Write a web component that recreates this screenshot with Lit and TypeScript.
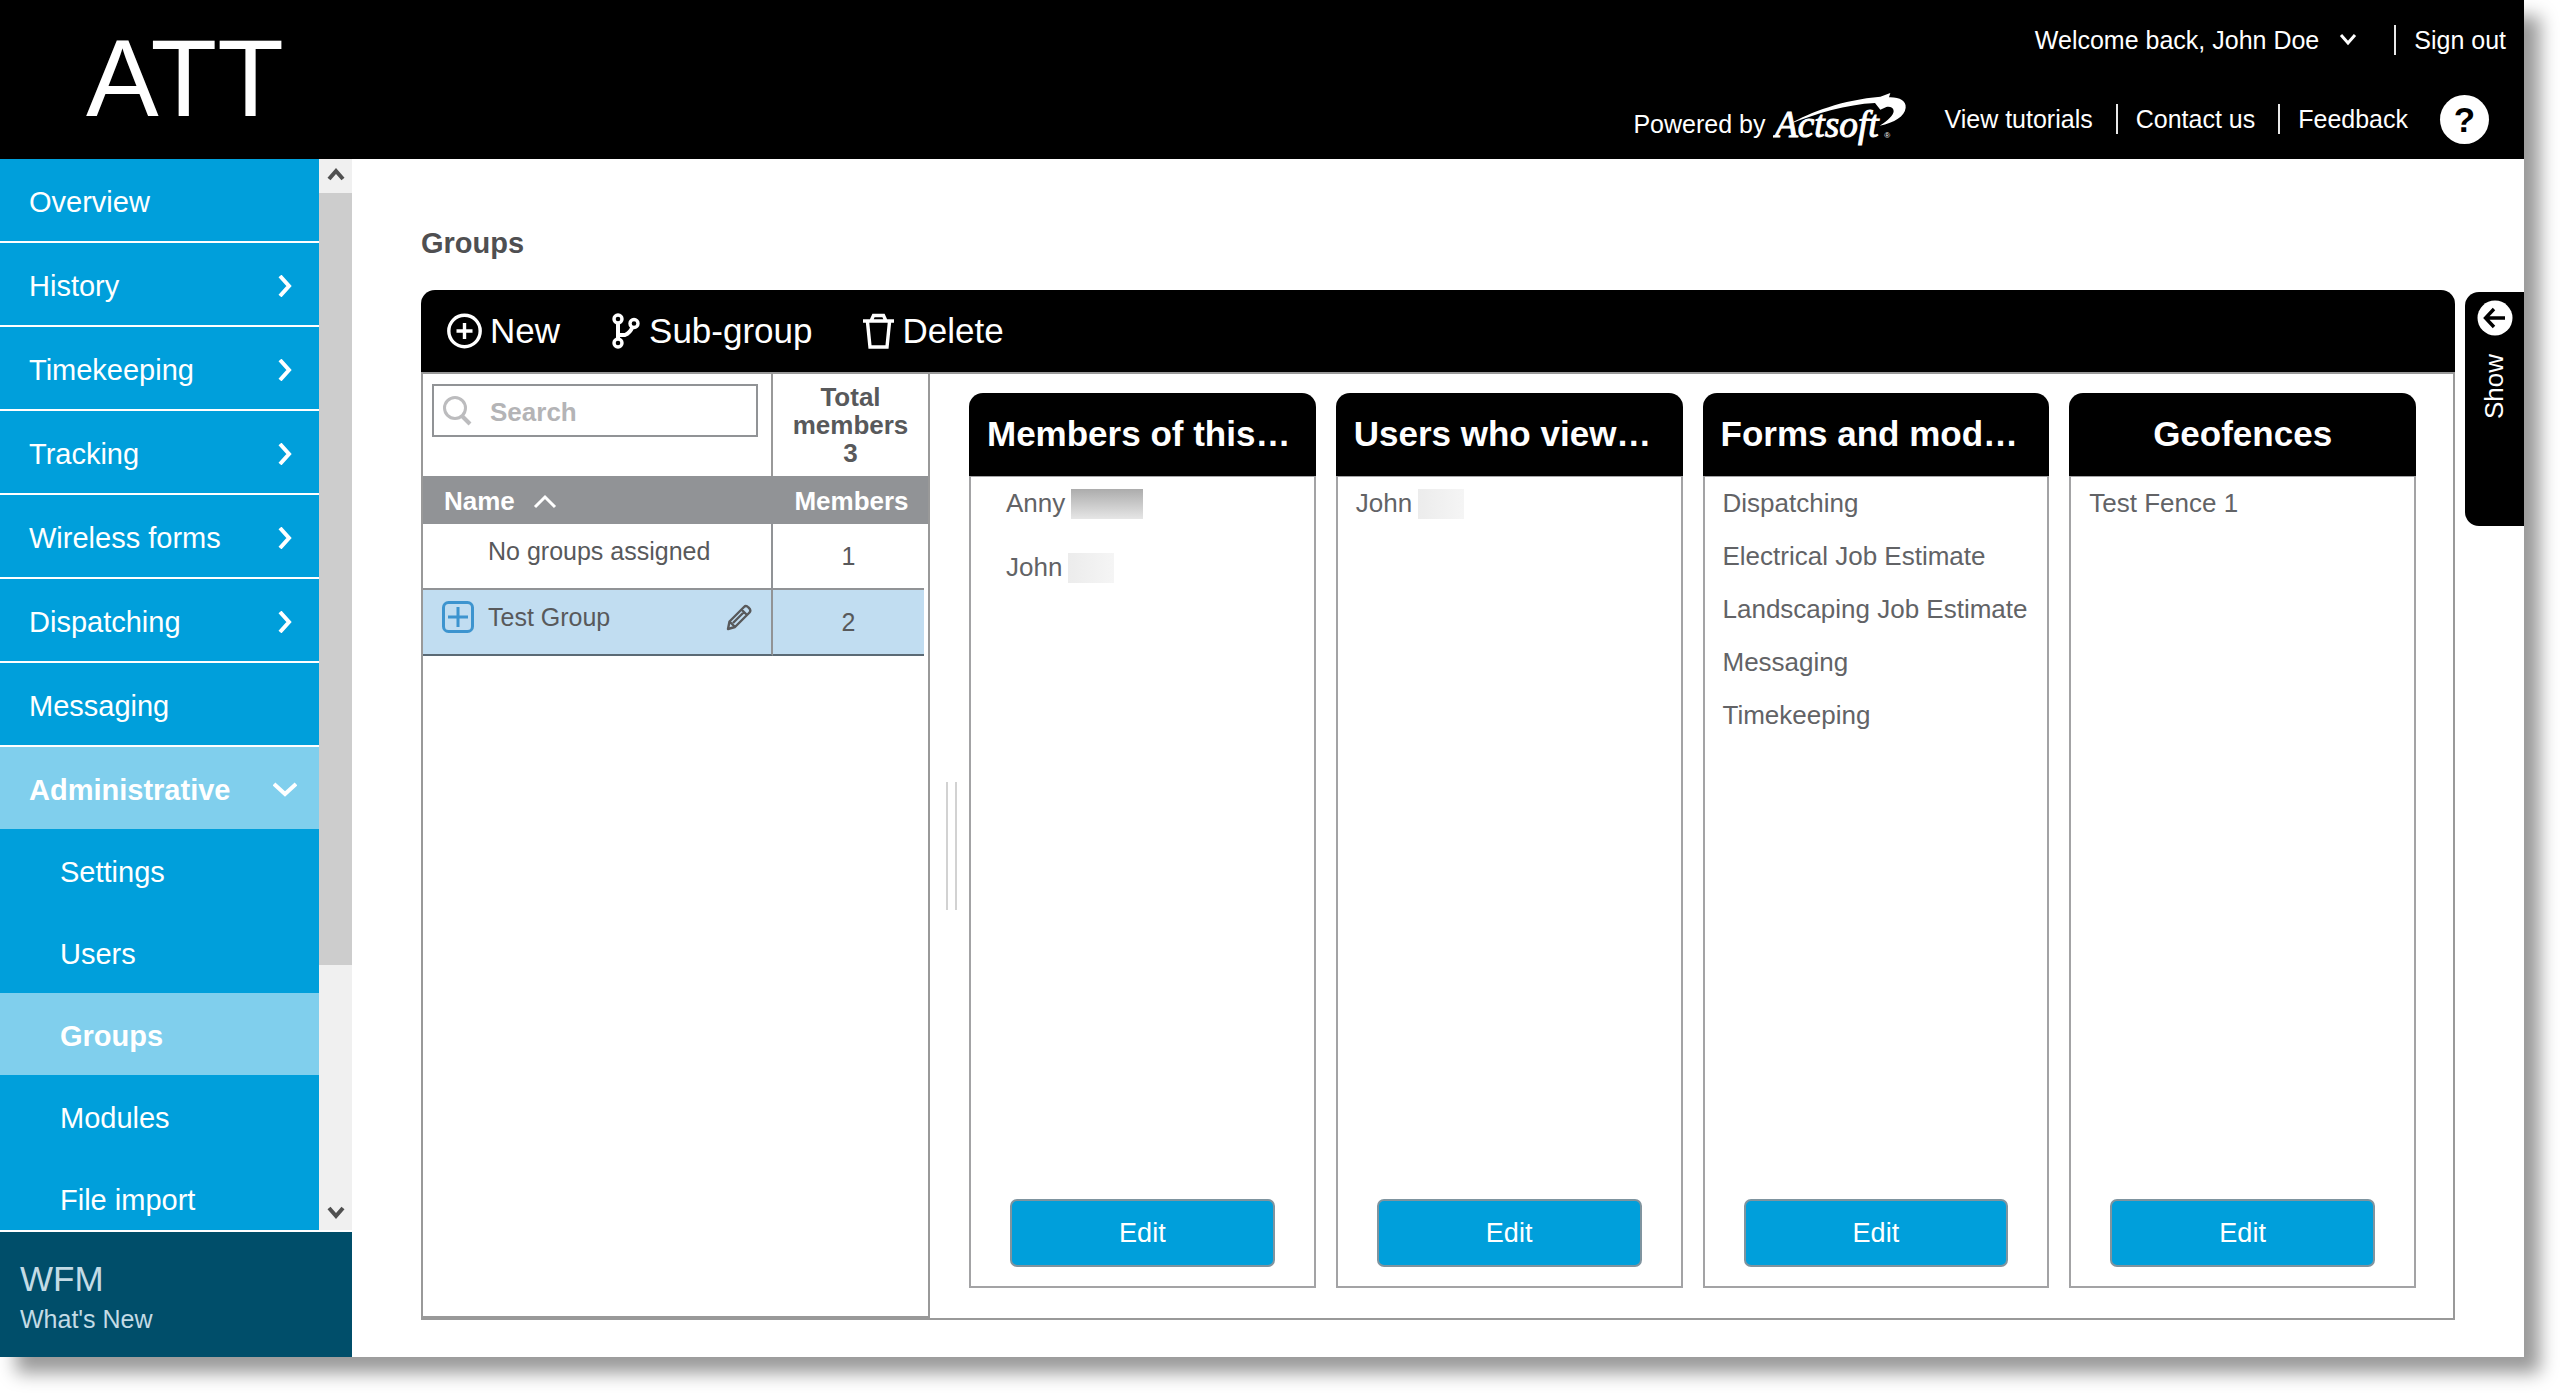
import { LitElement, html, css, svg, nothing } from "lit";
import { customElement, property, state } from "lit/decorators.js";
import { classMap } from "lit/directives/class-map.js";

const base = css`
  * {
    box-sizing: border-box;
  }
  button,
  input {
    font: inherit;
    color: inherit;
    margin: 0;
    padding: 0;
    border: 0;
    background: none;
  }
  a {
    color: inherit;
    text-decoration: none;
  }
  ul {
    list-style: none;
    margin: 0;
    padding: 0;
  }
  svg {
    display: block;
    flex: none;
  }
  h1,
  h2 {
    margin: 0;
  }
`;

const chevron = (d: string, w: number, h: number, stroke = 3) => html`
  <svg width=${w} height=${h} viewBox="0 0 ${w} ${h}" fill="none" stroke="currentColor" stroke-width=${stroke} aria-hidden="true">
    <path d=${d} />
  </svg>
`;

@customElement("top-header")
class TopHeader extends LitElement {
  static styles = [
    base,
    css`
      :host {
        display: flex;
        justify-content: space-between;
        height: 159px;
        background: #000;
        color: #fff;
        font-size: 25px;
        line-height: 30px;
      }
      .brand {
        padding-left: 86px;
        font-size: 109px;
        line-height: 156px;
      }
      .side {
        display: flex;
        flex-direction: column;
        align-items: flex-end;
      }
      .row {
        display: flex;
        align-items: center;
        flex: 1;
        white-space: nowrap;
      }
      .account {
        padding-right: 18px;
      }
      .tools {
        padding-right: 35px;
      }
      .user {
        display: flex;
        align-items: center;
        gap: 20px;
        padding-right: 37px;
      }
      .powered {
        display: flex;
        align-items: center;
        gap: 8px;
        padding: 10px 36px 0 0;
      }
      .powered svg {
        margin-top: -10px;
      }
      .divided {
        margin-left: 23px;
        padding-left: 18px;
        border-left: 2px solid #e8e8e8;
      }
      .account .divided {
        margin-left: 0;
      }
      .help {
        margin-left: 32px;
        width: 49px;
        height: 49px;
        border-radius: 50%;
        background: #fff;
        color: #000;
        font-size: 35px;
        line-height: 49px;
        font-weight: 700;
        text-align: center;
      }
    `,
  ];

  render() {
    return html`
      <div class="brand">ATT</div>
      <div class="side">
        <div class="row account">
          <button class="user">Welcome back, John Doe ${chevron("M2 2 L9 10 L16 2", 18, 14)}</button>
          <a class="divided" href="#sign-out">Sign out</a>
        </div>
        <nav class="row tools">
          <span class="powered">
            Powered by
            <svg width="135" height="56" viewBox="40 36 405 168" role="img" aria-label="Actsoft">
              <text x="46" y="174" font-family="Liberation Serif, serif" font-style="italic" font-size="112" fill="#fff" stroke="#fff" stroke-width="3">Actsoft</text>
              <text x="374" y="176" font-family="Liberation Sans, sans-serif" font-size="24" fill="#fff">®</text>
              <path
                fill="#fff"
                d="M92 134 C150 100 250 62 362 53 L392 42 L388 55 C420 54 440 66 438 86 C435 112 405 130 360 140 C386 124 402 108 402 96 C401 86 392 82 380 84 L362 92 L346 72 C260 76 170 104 92 134 Z"
              />
            </svg>
          </span>
          <a href="#tutorials">View tutorials</a>
          <a class="divided" href="#contact">Contact us</a>
          <a class="divided" href="#feedback">Feedback</a>
          <button class="help" aria-label="Help">?</button>
        </nav>
      </div>
    `;
  }
}

interface NavItem {
  label: string;
  expandable?: boolean;
}

@customElement("side-nav")
class SideNav extends LitElement {
  static styles = [
    base,
    css`
      :host {
        display: flex;
        flex-direction: column;
        width: 352px;
        flex: none;
        min-height: 0;
        color: #fff;
        font-size: 29px;
        line-height: 34px;
      }
      .scroller {
        display: flex;
        flex: 1 1 0;
        min-height: 0;
        border-bottom: 2px solid #fff;
      }
      .menu {
        flex: 1;
        overflow: hidden;
        background: #009fdb;
      }
      .entry {
        display: flex;
        align-items: center;
        justify-content: space-between;
        width: 100%;
        height: 82px;
        padding: 3px 26px 0 29px;
        text-align: left;
      }
      .top {
        border-bottom: 2px solid #fff;
      }
      .child {
        padding-left: 60px;
      }
      .active {
        background: #80cfed;
        font-weight: 700;
      }
      .open {
        padding-right: 22px;
      }
      .bar {
        display: flex;
        flex-direction: column;
        width: 33px;
        background: #f0f0f0;
        color: #505050;
      }
      .step {
        display: grid;
        place-items: center;
        height: 34px;
      }
      .track {
        flex: 1;
      }
      .thumb {
        height: 77%;
        background: #cdcdcd;
      }
      .news {
        display: block;
        height: 125px;
        padding: 25px 20px;
        background: #004e6a;
        color: #c3dbe5;
        font-size: 25px;
        line-height: 36px;
      }
      .product {
        display: block;
        font-size: 35px;
        line-height: 44px;
      }
    `,
  ];

  private items: NavItem[] = [
    { label: "Overview" },
    { label: "History", expandable: true },
    { label: "Timekeeping", expandable: true },
    { label: "Tracking", expandable: true },
    { label: "Wireless forms", expandable: true },
    { label: "Dispatching", expandable: true },
    { label: "Messaging" },
  ];

  private adminPages = ["Settings", "Users", "Groups", "Modules", "File import"];

  @state() private current = "Groups";

  render() {
    return html`
      <div class="scroller">
        <nav class="menu">
          <ul>
            ${this.items.map(
              (i) => html`<li class="top">
                ${i.expandable
                  ? html`<button class="entry" aria-expanded="false">${i.label}${chevron("M2 1 L11 11 L2 21", 15, 22, 4)}</button>`
                  : html`<a class="entry" href="#${i.label}">${i.label}</a>`}
              </li>`,
            )}
            <li>
              <button class="entry active open" aria-expanded="true">Administrative${chevron("M1 2 L12 12 L23 2", 24, 15, 4)}</button>
              <ul>
                ${this.adminPages.map(
                  (c) => html`<li>
                    <a class=${classMap({ entry: true, child: true, active: c === this.current })} href="#${c}" @click=${() => (this.current = c)}>${c}</a>
                  </li>`,
                )}
              </ul>
            </li>
          </ul>
        </nav>
        <div class="bar">
          <div class="step">${chevron("M2 12 L9 4 L16 12", 18, 18, 4)}</div>
          <div class="track"><div class="thumb"></div></div>
          <div class="step">${chevron("M2 2 L9 10 L16 2", 18, 14, 4)}</div>
        </div>
      </div>
      <a class="news" href="#whats-new"><span class="product">WFM</span>What's New</a>
    `;
  }
}

@customElement("group-table")
class GroupTable extends LitElement {
  static styles = [
    base,
    css`
      :host {
        display: block;
        width: 507px;
        flex: none;
        border-right: 2px solid #999;
        border-bottom: 2px solid #999;
        color: #58595b;
        font-size: 26px;
        line-height: 28px;
      }
      table {
        width: 100%;
        border-collapse: separate;
        border-spacing: 0;
        table-layout: fixed;
      }
      .name-col {
        width: 350px;
      }
      .edge-col {
        width: 4px;
      }
      th,
      td {
        padding: 0;
      }
      td {
        font-size: 25px;
      }
      .filter th {
        height: 102px;
      }
      .filter .find {
        vertical-align: top;
        padding: 10px 13px 0 9px;
        border-right: 2px solid #999;
      }
      .search {
        display: flex;
        align-items: center;
        gap: 18px;
        height: 53px;
        padding-left: 8px;
        border: 2px solid #919396;
      }
      .search input {
        width: 100%;
        min-width: 0;
        padding-top: 2px;
        font-weight: 700;
        outline: 0;
      }
      .search input::placeholder {
        color: #b4b4b6;
        opacity: 1;
      }
      .head th {
        height: 48px;
        padding: 2px 0 0 2px;
        background: #919396;
        color: #fff;
      }
      .sort {
        display: flex;
        align-items: center;
        gap: 18px;
        padding-left: 19px;
        font-weight: 700;
      }
      .name,
      .count {
        height: 66px;
        border-bottom: 2px solid #919396;
      }
      .name {
        border-right: 2px solid #919396;
      }
      .count {
        text-align: center;
      }
      .cell {
        display: flex;
        align-items: center;
        gap: 14px;
        padding: 0 19px 10px 19px;
      }
      .label {
        flex: 1;
      }
      .indent {
        width: 32px;
      }
      .picked .name,
      .picked .count {
        background: #c1ddf1;
        border-bottom-color: #5b6a75;
      }
    `,
  ];

  render() {
    return html`
      <table>
        <colgroup>
          <col class="name-col" />
          <col />
          <col class="edge-col" />
        </colgroup>
        <thead>
          <tr class="filter">
            <th class="find">
              <label class="search">
                <svg width="30" height="30" viewBox="0 0 30 30" fill="none" stroke="#bcbcbe" stroke-width="3" aria-hidden="true">
                  <circle cx="13" cy="12" r="10.5" />
                  <path d="M20 20 L28 28" stroke-width="4" />
                </svg>
                <input type="text" placeholder="Search" aria-label="Search" />
              </label>
            </th>
            <th colspan="2">Total<br />members<br />3</th>
          </tr>
          <tr class="head">
            <th><button class="sort">Name ${chevron("M2 13 L12 3 L22 13", 24, 15)}</button></th>
            <th colspan="2">Members</th>
          </tr>
        </thead>
        <tbody>
          <tr>
            <td class="name"><div class="cell"><span class="indent"></span><span class="label">No groups assigned</span></div></td>
            <td class="count">1</td>
            <td></td>
          </tr>
          <tr class="picked">
            <td class="name">
              <div class="cell">
                <button aria-label="Expand">
                  <svg width="32" height="32" viewBox="0 0 32 32" fill="none" stroke="#3d94cf" stroke-width="3">
                    <rect x="1.5" y="1.5" width="29" height="29" rx="5" />
                    <path d="M16 6 V26 M6 16 H26" />
                  </svg>
                </button>
                <span class="label">Test Group</span>
                <button aria-label="Edit group">
                  <svg width="26" height="27" viewBox="0 0 26 27" fill="none" stroke="#58595b" stroke-width="2.4" stroke-linejoin="round">
                    <path d="M2 25 L3.500 17.500 L18 3 Q20 1 22.500 3.500 Q25.500 6 23.500 8.500 L9 23 Z M3.500 17.500 L9 23 M15.500 5.500 L21 11 M7 19 L18 8" />
                  </svg>
                </button>
              </div>
            </td>
            <td class="count">2</td>
            <td></td>
          </tr>
        </tbody>
      </table>
    `;
  }
}

interface Entry {
  text: string;
  mask?: "dark" | "light";
}

@customElement("detail-card")
class DetailCard extends LitElement {
  static styles = [
    base,
    css`
      :host {
        display: flex;
        flex-direction: column;
        min-width: 0;
        color: #626366;
        font-size: 26px;
      }
      h2 {
        height: 83px;
        padding: 0 18px;
        border-radius: 14px 14px 0 0;
        background: #000;
        color: #fff;
        font-size: 35px;
        line-height: 82px;
        text-align: center;
        white-space: nowrap;
      }
      .clipped {
        text-align: left;
      }
      .body {
        display: flex;
        flex-direction: column;
        justify-content: space-between;
        flex: 1;
        padding: 0 0 19px;
        border: 2px solid #a3a3a5;
        border-top-width: 1px;
      }
      .list {
        display: flex;
        flex-direction: column;
        padding-left: 18px;
      }
      .people {
        gap: 11px;
        padding-left: 35px;
      }
      li {
        display: flex;
        align-items: center;
        gap: 6px;
        height: 53px;
        white-space: nowrap;
      }
      .mask {
        width: 46px;
        height: 30px;
        background: linear-gradient(90deg, #ececec, #f5f5f5);
      }
      .dark {
        width: 72px;
        background: linear-gradient(#acacac, #e6e6e6);
      }
      .edit {
        align-self: stretch;
        height: 68px;
        margin: 0 39px;
        border: 2px solid #7f949f;
        border-radius: 7px;
        background: #009fdb;
        color: #fff;
        font-size: 27px;
      }
    `,
  ];

  @property() heading = "";
  @property({ attribute: false }) entries: Entry[] = [];
  @property({ type: Boolean }) people = false;

  render() {
    return html`
      <h2 class=${classMap({ clipped: this.heading.endsWith("…") })}>${this.heading}</h2>
      <div class="body">
        <ul class=${classMap({ list: true, people: this.people })}>
          ${this.entries.map(
            (e) => html`<li>${e.text}${e.mask ? html`<span class=${classMap({ mask: true, dark: e.mask === "dark" })}></span>` : nothing}</li>`,
          )}
        </ul>
        <button class="edit">Edit</button>
      </div>
    `;
  }
}

@customElement("app-root")
class AppRoot extends LitElement {
  static styles = [
    base,
    css`
      :host {
        display: block;
        height: 100vh;
        overflow: hidden;
        padding: 0 36px 36px 0;
        box-sizing: border-box;
        background: #fff;
        font-family: "Liberation Sans", Arial, sans-serif;
      }
      .frame {
        display: flex;
        flex-direction: column;
        height: 100%;
        background: #fff;
        box-shadow: 16px 16px 17px rgba(0, 0, 0, 0.4);
      }
      .content {
        display: flex;
        flex: 1;
        min-height: 0;
      }
      main {
        display: flex;
        flex-direction: column;
        flex: 1;
        min-width: 0;
        padding: 66px 0 37px 69px;
      }
      h1 {
        margin-bottom: 29px;
        color: #4f4f51;
        font-size: 29px;
        line-height: 36px;
      }
      .work {
        display: flex;
        flex: 1;
        gap: 10px;
      }
      .panel {
        display: flex;
        flex-direction: column;
        flex: 1;
        min-width: 0;
      }
      .toolbar {
        display: flex;
        gap: 51px;
        height: 82px;
        padding-left: 26px;
        border-radius: 14px 14px 0 0;
        background: #000;
        color: #fff;
        font-size: 35px;
      }
      .action {
        display: flex;
        align-items: center;
        gap: 8px;
      }
      .split {
        display: flex;
        flex: 1;
        border: 2px solid #999;
      }
      .grip {
        align-self: center;
        width: 11px;
        height: 128px;
        margin: 0 12px 0 16px;
        border: solid #d2d2d2;
        border-width: 0 2px;
      }
      .cards {
        display: grid;
        grid-template-columns: repeat(4, minmax(0, 1fr));
        gap: 20px;
        flex: 1;
        padding: 19px 37px 30px 0;
      }
      .show {
        display: flex;
        flex-direction: column;
        align-items: center;
        gap: 18px;
        width: 59px;
        height: 234px;
        margin-top: 2px;
        padding-top: 8px;
        border-radius: 14px 0 0 14px;
        background: #000;
        color: #fff;
        font-size: 26px;
      }
      .vertical {
        writing-mode: vertical-rl;
        transform: rotate(180deg);
      }
    `,
  ];

  private members: Entry[] = [
    { text: "Anny", mask: "dark" },
    { text: "John", mask: "light" },
  ];
  private viewers: Entry[] = [{ text: "John", mask: "light" }];
  private forms: Entry[] = ["Dispatching", "Electrical Job Estimate", "Landscaping Job Estimate", "Messaging", "Timekeeping"].map((text) => ({ text }));
  private fences: Entry[] = [{ text: "Test Fence 1" }];

  private icon(width: number, shapes: unknown) {
    return html`<svg width=${width} height="36" viewBox="0 0 ${width} 36" fill="none" stroke="currentColor" stroke-width="3.4" aria-hidden="true">${shapes}</svg>`;
  }

  render() {
    return html`
      <div class="frame">
        <top-header></top-header>
        <div class="content">
          <side-nav></side-nav>
          <main>
            <h1>Groups</h1>
            <div class="work">
              <section class="panel">
                <div class="toolbar">
                  <button class="action">
                    ${this.icon(35, svg`<circle cx="17.500" cy="18" r="15.700" /><path d="M17.500 10 V26 M9.500 18 H25.500" />`)}New
                  </button>
                  <button class="action">
                    ${this.icon(
                      30,
                      svg`<circle cx="7" cy="6" r="4" /><circle cx="7" cy="30" r="4" /><circle cx="23" cy="10.500" r="4" /><path d="M7 10 V26 M7 22 H14 Q19 20 21.500 14" stroke-width="4" />`,
                    )}Sub-group
                  </button>
                  <button class="action">
                    ${this.icon(31, svg`<path d="M0 8 H31 M8 8 L10.500 2.500 H20.500 L23 8 M4.500 9 L7 34 H24 L26.500 9" />`)}Delete
                  </button>
                </div>
                <div class="split">
                  <group-table></group-table>
                  <div class="grip"></div>
                  <div class="cards">
                    <detail-card heading="Members of this…" .entries=${this.members} people></detail-card>
                    <detail-card heading="Users who view…" .entries=${this.viewers}></detail-card>
                    <detail-card heading="Forms and mod…" .entries=${this.forms}></detail-card>
                    <detail-card heading="Geofences" .entries=${this.fences}></detail-card>
                  </div>
                </div>
              </section>
              <button class="show">
                <svg width="36" height="36" viewBox="0 0 36 36" fill="none" stroke="#000" stroke-width="3.4" aria-hidden="true">
                  <circle cx="18" cy="18" r="17.500" fill="#fff" stroke="none" />
                  <path d="M9 18 H28 M17 9 L8.500 18 L17 27" />
                </svg>
                <span class="vertical">Show</span>
              </button>
            </div>
          </main>
        </div>
      </div>
    `;
  }
}
